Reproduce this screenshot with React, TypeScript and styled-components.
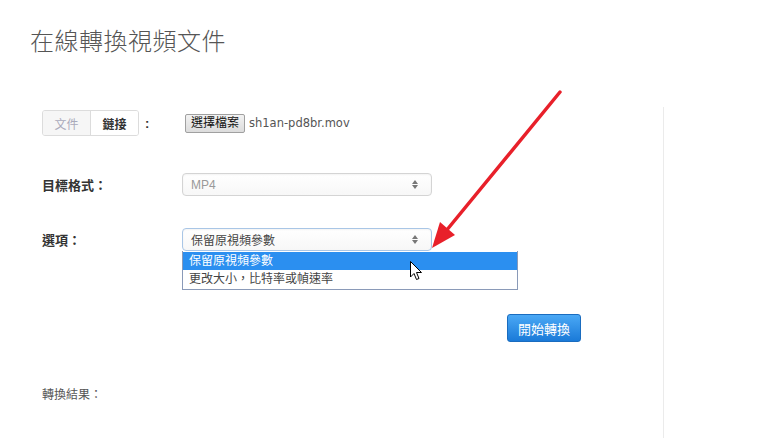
import React from "react";
import styled, { createGlobalStyle } from "styled-components";

const GlobalStyle = createGlobalStyle`
  html, body {
    margin: 0;
    padding: 0;
    background: #fff;
  }
  body {
    font-family: "Liberation Sans", "Noto Sans CJK TC", sans-serif;
    color: #333;
  }
`;

const cjk = `"Liberation Sans", "Noto Sans CJK TC", sans-serif`;

const Page = styled.div`
  position: relative;
  width: 774px;
  height: 438px;
  overflow: hidden;
`;

const Heading = styled.h1`
  margin: 0;
  padding: 27px 0 0 30px;
  font-family: ${cjk};
  font-weight: 300;
  font-size: 24px;
  line-height: 30px;
  color: #555;
  letter-spacing: 0.5px;
`;

const Panel = styled.div`
  margin: 50px 0 0 30px;
  width: 634px;
  height: 340px;
  border-right: 1px solid #ebebeb;
  padding: 3px 0 0 12px;
  box-sizing: border-box;
  display: flex;
  flex-direction: column;
`;

const Row = styled.div<{ $top: number; $h: number }>`
  display: flex;
  align-items: center;
  margin-top: ${(p) => p.$top}px;
  height: ${(p) => p.$h}px;
  position: relative;
`;

const Label = styled.div`
  width: 140px;
  flex: none;
  font-family: ${cjk};
  font-weight: bold;
  font-size: 13px;
  color: #333;
`;

const TabGroup = styled.div`
  display: flex;
  height: 26px;
  border: 1px solid #dcdcdc;
  border-radius: 3px;
  box-sizing: border-box;
  overflow: hidden;
`;

const Tab = styled.div<{ $active?: boolean }>`
  width: 47px;
  display: flex;
  align-items: center;
  justify-content: center;
  font-family: ${cjk};
  font-size: 12px;
  font-weight: ${(p) => (p.$active ? "bold" : "normal")};
  color: ${(p) => (p.$active ? "#333" : "#aab")};
  background: ${(p) => (p.$active ? "#fff" : "#f6f6f6")};
  & + & {
    border-left: 1px solid #dcdcdc;
  }
`;

const Colon = styled.span`
  width: 46px;
  flex: none;
  padding-left: 6px;
  box-sizing: border-box;
  font-weight: bold;
  font-size: 13px;
`;

const FileButton = styled.button`
  height: 19px;
  padding: 0 5px;
  margin: 0;
  font-family: ${cjk};
  font-size: 12px;
  color: #111;
  border: 1px solid #a0a0a0;
  border-radius: 2px;
  background: linear-gradient(#f2f2f2, #dcdcdc);
  line-height: 16px;
`;

const FileName = styled.span`
  margin-left: 4px;
  font-family: "DejaVu Sans", sans-serif;
  font-size: 11.5px;
  color: #555;
`;

const Select = styled.div<{ $focus?: boolean }>`
  width: 250px;
  height: 23px;
  box-sizing: border-box;
  border: 1px solid ${(p) => (p.$focus ? "#a9c6e6" : "#d4d4d4")};
  border-radius: 4px;
  background: linear-gradient(#fff, #f7f7f7);
  box-shadow: inset 0 1px 2px rgba(0, 0, 0, 0.05);
  display: flex;
  align-items: center;
  justify-content: space-between;
  padding: 0 13px 0 8px;
  font-family: ${cjk};
  font-size: 12px;
  color: ${(p) => (p.$focus ? "#444" : "#999")};
`;

const Spinner = styled.span`
  display: flex;
  flex-direction: column;
  gap: 1px;
  align-items: center;
  i {
    width: 0;
    height: 0;
    border-left: 3px solid transparent;
    border-right: 3px solid transparent;
  }
  i:first-child {
    border-bottom: 4px solid #777;
  }
  i:last-child {
    border-top: 4px solid #777;
  }
`;

const Options = styled.ul`
  position: absolute;
  left: 140px;
  top: 23px;
  width: 336px;
  margin: 0;
  padding: 1px 0;
  list-style: none;
  border: 1px solid #8a9ab8;
  border-top: none;
  background: #fff;
  box-sizing: border-box;
  z-index: 2;
`;

const Option = styled.li<{ $selected?: boolean }>`
  height: 18px;
  line-height: 18px;
  padding-left: 6px;
  font-family: ${cjk};
  font-size: 12px;
  color: ${(p) => (p.$selected ? "#fff" : "#444")};
  background: ${(p) => (p.$selected ? "#2b8ff0" : "transparent")};
`;

const SubmitRow = styled.div`
  margin-top: 63px;
  padding-left: 465px;
`;

const SubmitButton = styled.button`
  width: 74px;
  height: 28px;
  border: 1px solid #1a6cbf;
  border-radius: 3px;
  background: linear-gradient(#4aa8f5, #1a7ad8);
  color: #fff;
  font-family: ${cjk};
  font-size: 13px;
  padding: 0;
`;

const Result = styled.div`
  margin-top: 43px;
  font-family: ${cjk};
  font-size: 12px;
  color: #555;
`;

const Overlay = styled.svg`
  position: absolute;
  left: 0;
  top: 0;
  pointer-events: none;
  z-index: 3;
`;

export default function App() {
  return (
    <Page>
      <GlobalStyle />
      <Heading>在線轉換視頻文件</Heading>
      <Panel>
        <Row $top={0} $h={26}>
          <TabGroup>
            <Tab>文件</Tab>
            <Tab $active>鏈接</Tab>
          </TabGroup>
          <Colon>:</Colon>
          <FileButton>選擇檔案</FileButton>
          <FileName>sh1an-pd8br.mov</FileName>
        </Row>
        <Row $top={37} $h={23}>
          <Label>目標格式：</Label>
          <Select>
            MP4
            <Spinner>
              <i />
              <i />
            </Spinner>
          </Select>
        </Row>
        <Row $top={32} $h={23}>
          <Label>選項：</Label>
          <Select $focus>
            保留原視頻參數
            <Spinner>
              <i />
              <i />
            </Spinner>
          </Select>
          <Options>
            <Option $selected>保留原視頻參數</Option>
            <Option>更改大小，比特率或幀速率</Option>
          </Options>
        </Row>
        <SubmitRow>
          <SubmitButton>開始轉換</SubmitButton>
        </SubmitRow>
        <Result>轉換結果：</Result>
      </Panel>

      <Overlay width="774" height="438" viewBox="0 0 774 438">
        {/* red pointer arrow */}
        <line x1="560" y1="92" x2="446" y2="231" stroke="#e8202a" strokeWidth="3.5" strokeLinecap="round" />
        <polygon points="432,248 440,222 455,235" fill="#e8202a" />
        {/* mouse cursor */}
        <path
          d="M410.5 261.5 L410.5 277 L414 273.5 L416.5 279.5 L419 278.5 L416.5 272.5 L421.5 272.5 Z"
          fill="#fff"
          stroke="#000"
          strokeWidth="1"
          strokeLinejoin="round"
        />
      </Overlay>
    </Page>
  );
}
